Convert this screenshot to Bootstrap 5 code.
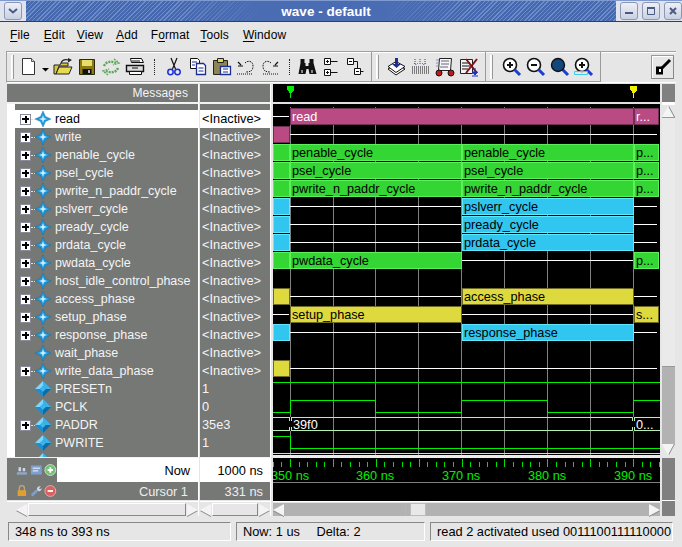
<!DOCTYPE html>
<html lang="en">
<head>
  <meta charset="UTF-8" />
  <title>wave - default</title>
  <link href="https://cdn.jsdelivr.net/npm/bootstrap@5.3.2/dist/css/bootstrap.min.css" rel="stylesheet">
  <style>
    html, body { height: 547px; overflow: hidden; }
    body { background: #e6e6e6; font-family: "Liberation Sans", Arial, sans-serif; font-size: 12.5px; color: #000; }

    /* title bar */
    .title-row { height: 22px; background: #dfe3ee; border-top: 1px solid #7f9ad0; border-bottom: 1px solid #2b3f6b; }
    .title-fill { width: 594px; color: #fff; font-weight: 700; font-size: 13.5px; line-height: 22px; padding-left: 10px;
      background:
        linear-gradient(90deg, transparent 25%, #4a6cb3 40%, #4a6cb3 60%, transparent 75%),
        repeating-linear-gradient(135deg, #6d8ccb 0 1px, #4568ae 1px 3px); }
    .win-btn { width: 18px; height: 18px; background: linear-gradient(#eef0f6, #c9d0e2); border: 1px solid #8c97b5; border-radius: 3px; }
    .win-btn svg { display: block; margin: 2px; }

    /* menu */
    .menu-row { height: 25px; padding-top: 6px; line-height: 15px; font-size: 12px; letter-spacing: .1px; }
    .menu-row u { text-underline-offset: 2px; }
    .menu-file { margin-left: 10px; }
    .menu-edit { margin-left: 14px; }
    .menu-view { margin-left: 12px; }
    .menu-add { margin-left: 13px; }
    .menu-format { margin-left: 13px; }
    .menu-tools { margin-left: 11px; }
    .menu-window { margin-left: 14px; }

    /* toolbar */
    .tool-strip { height: 32px; margin: 4px 6px 1px 6px; border: 1px solid #a0a0a0; border-right: 0; border-bottom-color: #fff; background: #e6e6e6; box-shadow: inset 0 1px 0 #fff; }
    .tool-group { height: 30px; border-right: 1px solid #9a9a9a; border-bottom: 1px solid #9a9a9a; }
    .tool-handle { width: 3px; height: 24px; background: #f7f7f7; border-right: 1px solid #999; border-left: 1px solid #fff; flex: none; margin-left: 4px; }
    .gap-doc { margin-right: 3px; }
    .gap-list { margin-right: 6px; }
    .gap-zoom { margin-right: 7px; }
    .tool-ico { width: 24px; height: 22px; flex: none; }
    .tool-ico svg { display: block; margin: 1px auto 0; }
    .tool-sep { width: 0; height: 16px; border-left: 1px dotted #222; margin: 0 7px; }
    .tool-sep-b { margin-right: 5px; }
    .tool-arrow { width: 10px; flex: none; }
    .tool-end { width: 4px; flex: none; }
    .tool-pick { width: 23px; height: 24px; margin-right: 2px; border: 1px solid #999; border-right-color: #888; border-bottom-color: #888; background: #e6e6e6; box-shadow: inset 1px 1px 0 #fff; }

    /* panes */
    .panes { height: 432px; margin-left: 7px; }
    .names-col { width: 191px; flex: none; }
    .values-col { width: 70px; margin-left: 1px; flex: none; }
    .wave-col { width: 387px; margin-left: 2px; flex: none; }
    .split-line { width: 1px; background: #fff; flex: none; }
    .pane-head { height: 18px; line-height: 18px; font-size: 12px; letter-spacing: .1px; background: #767876; color: #f4f4f4; text-align: right; padding-right: 10px; flex: none; }
    .head-rule { height: 2px; background: #f2f2f2; flex: none; }
    .foot-rule { height: 1px; background: #f2f2f2; flex: none; }
    .names-body { height: 353px; flex: none; overflow: hidden; background: #767876; border-left: 8px solid #fff; padding-top: 6px; color: #f4f4f4; }
    .values-body { height: 353px; flex: none; overflow: hidden; background: #767876; padding-top: 6px; color: #f4f4f4; font-size: 12.8px; }
    .sig-row { height: 18px; line-height: 18px; padding-left: 5px; white-space: nowrap; }
    .sig-row.picked { background: #fff; color: #000; }
    .sig-plus { width: 11px; height: 11px; background: #fff; border: 1px solid #8a8a9a; position: relative; flex: none; }
    .sig-plus::before { content: ""; position: absolute; left: 1px; right: 1px; top: 3.500px; height: 2px; background: #000; }
    .sig-plus::after { content: ""; position: absolute; top: 1px; bottom: 1px; left: 3.500px; width: 2px; background: #000; }
    .sig-dots { width: 4px; border-top: 1px dotted #ddd; flex: none; }
    .sig-gap { width: 15px; flex: none; }
    .sig-name { margin-left: 4px; }
    .val-row { height: 18px; line-height: 18px; padding-left: 2px; white-space: nowrap; }
    .val-row.picked { background: #fff; color: #000; }
    .now-row { height: 24px; flex: none; background: #fff; line-height: 25px; text-align: right; font-size: 12.8px; }
    .now-icons { width: 50px; height: 24px; background: #767876; gap: 0 2px; padding-left: 9px; }
    .cursor-row { height: 18px; flex: none; line-height: 20px; background: #767876; color: #eee; text-align: right; font-size: 12.8px; }
    .name-scroll { height: 15px; flex: none; margin-top: 1px; border-top: 1px solid #fff; padding-top: 1px; }
    .name-scroll-pad { padding-left: 9px; }
    .wave-scroll { margin-top: 0; }
    .now-label { padding-right: 8px; }
    .values-label { padding-right: 7px; }
    .cursor-label { padding-right: 10px; }

    /* scrollbars */
    .bar-h { height: 13px; background: #e6e6e6; }
    .bar-arrow-l, .bar-arrow-r { width: 12px; height: 13px; flex: none; position: relative; }
    .bar-arrow-l::after, .bar-arrow-r::after { content: ""; position: absolute; top: 1px; border: 6px solid transparent; border-left-width: 11px; border-right-width: 0; }
    .bar-arrow-l::after { border-left-width: 0; border-right-width: 11px; border-right-color: #f4f4f4; left: 0; filter: drop-shadow(0 1px 0 #888); }
    .bar-arrow-r::after { border-left-color: #f4f4f4; right: 0; filter: drop-shadow(0 1px 0 #888); }
    .bar-thumb { background: #e6e6e6; border: 1px solid #a8a8a8; border-top-color: #fff; border-left-color: #fff; border-right-color: #888; border-bottom-color: #888; }
    .wave-trough { background: #b2b2b2; }
    .wave-thumb { width: 16px; height: 13px; background: #e8e8e8; border: 1px solid #bbb; margin-left: 125px; position: relative; }
    .wave-thumb::before { content: ""; position: absolute; left: -6px; top: 0; bottom: 0; width: 1px; background: #d8c030; }

    /* right scrollbar column */
    .v-col { width: 13px; margin-left: 2px; flex: none; }
    .v-cap { height: 18px; background: #808080; flex: none; }
    .v-rule { height: 3px; background: #fff; flex: none; }
    .v-up, .v-down { height: 12px; background: #e6e6e6; flex: none; position: relative; }
    .v-up::after, .v-down::after { content: ""; position: absolute; left: 0; border: 6px solid transparent; }
    .v-up::after { bottom: 0; border-top-width: 0; border-bottom-width: 11px; border-bottom-color: #f4f4f4; filter: drop-shadow(1px 0 0 #888); }
    .v-down::after { top: 0; border-bottom-width: 0; border-top-width: 11px; border-top-color: #f4f4f4; filter: drop-shadow(1px 0 0 #888); }
    .v-thumb { height: 250px; flex: none; background: #eaeaea; border-bottom: 1px solid #999; border-top: 1px solid #999; }
    .v-trough { height: 77px; flex: none; background: #b2b2b2; }
    .v-foot { height: 42px; flex: none; background: #808080; margin-top: 2px; }
    .v-end { height: 16px; flex: none; background: #808080; border-top: 1px solid #fff; }

    /* status bar */
    .status-row { margin: 6px 0 0 8px; gap: 5px; }
    .status-cell { height: 19px; line-height: 17px; padding-left: 6px; border: 1px solid #fff; border-top-color: #888; border-left-color: #888; white-space: nowrap; overflow: hidden; font-size: 12.8px; }
    .cell-range { width: 223px; }
    .cell-now { width: 189px; }
    .cell-read { width: 243px; }
    .delta-gap { margin-left: 13px; }
    #wave { display: block; flex: none; }
    #wave text { font-family: "Liberation Sans", Arial, sans-serif; font-size: 12.7px; }
  </style>
</head>
<body>
  <svg width="0" height="0" class="position-absolute">
    <symbol id="star" viewBox="0 0 16 16">
      <path d="M8 0 10.500 5.500 16 8 10.500 10.500 8 16 5.500 10.500 0 8 5.500 5.500Z" fill="#1f9ae0" stroke="#12648f" stroke-width=".4"/>
      <path d="M8 4 9 7 12 8 9 9 8 12 7 9 4 8 7 7Z" fill="#c8f0ff"/>
    </symbol>
    <symbol id="diamond" viewBox="0 0 16 16">
      <path d="M8 0 16 8 8 16 0 8Z" fill="#1a8fd0"/>
      <path d="M8 0 0 8 5 8 8 5Z" fill="#7fd6fa"/>
      <path d="M8 0 16 8 11 8 8 5Z" fill="#38b4ea"/>
      <path d="M5 8 8 5 11 8 8 11Z" fill="#3cb6ee"/>
      <path d="M8 16 16 8 11 8 8 11Z" fill="#0e6ba8"/>
    </symbol>
    <symbol id="zoomglass" viewBox="0 0 20 20">
      <circle cx="8" cy="8" r="6.5" fill="#fff" stroke="#111" stroke-width="1.6"/>
      <path d="M12.5 12.5 18 18" stroke="#1c3fd0" stroke-width="3"/>
    </symbol>
  </svg>

  <!-- title bar -->
  <div class="title-row d-flex align-items-center">
    <div class="win-btn ms-1">
      <svg width="12" height="12" viewBox="0 0 12 12"><path d="M2 4l4 3.500L10 4" fill="none" stroke="#4a5a86" stroke-width="2"/></svg>
    </div>
    <div class="title-fill h-100 text-center ms-1">wave - default</div>
    <div class="d-flex ms-1 gap-1">
      <div class="win-btn"><svg width="12" height="12" viewBox="0 0 12 12"><path d="M2 8h8" stroke="#4a5a86" stroke-width="2"/></svg></div>
      <div class="win-btn"><svg width="12" height="12" viewBox="0 0 12 12"><path d="M2.500 2.500h7v7h-7z" fill="none" stroke="#4a5a86"/><path d="M2 3h8" stroke="#4a5a86" stroke-width="2"/></svg></div>
      <div class="win-btn"><svg width="12" height="12" viewBox="0 0 12 12"><path d="M3 3l6 6M9 3l-6 6" stroke="#4a5a86" stroke-width="2"/></svg></div>
    </div>
  </div>

  <!-- menu -->
  <div class="menu-row d-flex">
    <span class="menu-file"><u>F</u>ile</span>
    <span class="menu-edit"><u>E</u>dit</span>
    <span class="menu-view"><u>V</u>iew</span>
    <span class="menu-add"><u>A</u>dd</span>
    <span class="menu-format">F<u>o</u>rmat</span>
    <span class="menu-tools"><u>T</u>ools</span>
    <span class="menu-window"><u>W</u>indow</span>
  </div>

  <!-- toolbar -->
  <div class="tool-strip d-flex align-items-center">
    <div class="tool-group d-flex align-items-center">
      <div class="tool-handle gap-doc"></div>
      <div class="tool-ico"><svg width="20" height="20" viewBox="0 0 20 20"><path d="M3.500 1.500h9l3 3v13h-12z" fill="#fff" stroke="#333"/><path d="M12.500 1.500v3h3" fill="#ddd" stroke="#555"/></svg></div>
      <div class="tool-arrow"><svg width="10" height="20" viewBox="0 0 10 20"><path d="M1 11h7l-3.500 3.500z" fill="#000"/></svg></div>
      <div class="tool-ico"><svg width="20" height="20" viewBox="0 0 20 20"><path d="M1 17V8h6l1-2h7v3H6L3 17Z" fill="#d8c83a" stroke="#222"/><path d="M3 17l3-7h13l-3 7Z" fill="#e8da50" stroke="#222"/><path d="M8 6c1-3 4-4 8-3" fill="none" stroke="#222" stroke-width="1.200"/><path d="M15 1l4 2-4 2.500z" fill="#222"/></svg></div>
      <div class="tool-ico"><svg width="20" height="20" viewBox="0 0 20 20"><path d="M2.500 2.500h15v15h-15z" fill="#8c7a10" stroke="#2a2a10"/><path d="M5 3h10v6H5z" fill="#e8dc6a"/><path d="M5.500 12h9v5h-9z" fill="#111"/><path d="M11 13h2v3h-2z" fill="#bbb"/></svg></div>
      <div class="tool-ico"><svg width="20" height="20" viewBox="0 0 20 20" fill="none" stroke="#58a858" stroke-width="2.400" stroke-dasharray="2 1"><path d="M3 9c2-5 8-5 12-3"/><path d="M17 11c-2 5-8 5-12 3"/><path d="M13 2l5 4-6 2M7 18l-5-4 6-2" stroke-width="1.400"/></svg></div>
      <div class="tool-ico"><svg width="20" height="20" viewBox="0 0 20 20"><path d="M5.500 1.500h11l2 4h-12z" fill="#fff" stroke="#111"/><path d="M1.500 8.500h17v6h-17z" fill="#dcdcdc" stroke="#111" stroke-width="1.400"/><path d="M4.500 14.500h12v3h-12z" fill="#fff" stroke="#111"/><path d="M7 4h8M7 11h6" stroke="#111"/></svg></div>
      <div class="tool-sep"></div>
      <div class="tool-ico"><svg width="20" height="20" viewBox="0 0 20 20"><path d="M7 1l4.500 11M13 1L8.500 12" stroke="#111" stroke-width="1.200" fill="none"/><circle cx="6.500" cy="15" r="2.700" fill="none" stroke="#1c2fd8" stroke-width="1.500"/><circle cx="13.500" cy="15" r="2.700" fill="none" stroke="#1c2fd8" stroke-width="1.500"/></svg></div>
      <div class="tool-ico"><svg width="20" height="20" viewBox="0 0 20 20"><path d="M2.500 1.500h7l2 2v8h-9z" fill="#fff" stroke="#111"/><path d="M8.500 6.500h7l2 2v9h-9z" fill="#fff" stroke="#1c2f90" stroke-width="1.300"/><path d="M4 5h5M4 8h3M10.500 11h5M10.500 14h5" stroke="#1c2f90"/></svg></div>
      <div class="tool-ico"><svg width="20" height="20" viewBox="0 0 20 20"><path d="M1.500 3.500h14v14h-14z" fill="#8c8454" stroke="#222"/><path d="M5.500 1.500h6v4h-6z" fill="#e0d060" stroke="#222"/><path d="M8.500 9.500h10v8h-10z" fill="#fff" stroke="#1c2f90" stroke-width="1.300"/><path d="M11 12h5M11 15h5" stroke="#1c2f90"/></svg></div>
      <div class="tool-ico"><svg width="20" height="20" viewBox="0 0 20 20" fill="none" stroke="#111"><path d="M9 6c3-3 8-2 8 3s-3 6-7 6" stroke-dasharray="1.500 1"/><path d="M2 5l3 3M2 9h5" stroke-width="1.200"/><path d="M1 17h16" stroke-dasharray="1 1"/></svg></div>
      <div class="tool-ico"><svg width="20" height="20" viewBox="0 0 20 20" fill="none" stroke="#111"><path d="M11 6C8 3 3 4 3 9s3 6 7 6" stroke-dasharray="1.500 1"/><path d="M18 5l-3 3M18 9h-5" stroke-width="1.200"/><path d="M3 17h16" stroke-dasharray="1 1"/></svg></div>
      <div class="tool-sep tool-sep-b"></div>
      <div class="tool-ico"><svg width="20" height="20" viewBox="0 0 20 20"><path d="M3 2h4v4h1v3h3V6h1V2h4v4l3 11h-7l-1-5H9l-1 5H1L3 6Z" transform="translate(.5)" fill="#111"/><path d="M4 13h2v3H4zM14 13h2v3h-2z" fill="#888"/></svg></div>
      <div class="tool-ico"><svg width="20" height="20" viewBox="0 0 20 20" fill="none" stroke="#111"><path d="M3.500 1.500h6v6h-6zM3.500 12.500h6v6h-6z" fill="#fff"/><path d="M5 4.500h3M6.500 3v3M5 15.500h3M6.500 14v3M9.500 4.500h7M9.500 15.500h7"/></svg></div>
      <div class="tool-ico"><svg width="20" height="20" viewBox="0 0 20 20" fill="none" stroke="#111"><path d="M2.500 1.500h6v6h-6zM9.500 11.500h6v6h-6z" fill="#fff"/><path d="M4 4.500h3M11 14.500h3M8.500 4.500h4v7M15.500 14.500h3"/></svg></div>
      <div class="tool-end"></div>
    </div>
    <div class="tool-group d-flex align-items-center">
      <div class="tool-handle gap-list"></div>
      <div class="tool-ico"><svg width="20" height="20" viewBox="0 0 20 20"><path d="M1 12l8-5 9 5-9 6z" fill="#fff" stroke="#111"/><path d="M1 9.500l8-5 9 5-9 6z" fill="#fff" stroke="#111"/><path d="M8 1h3v6h3l-4.500 4L5 7h3z" fill="#1c2f90"/></svg></div>
      <div class="tool-ico"><svg width="20" height="20" viewBox="0 0 20 20" fill="none"><path d="M4 2v5M9 2v5M14 2v5M3 6l2 2 2-2M11 6l2 2 2-2" stroke="#2a3fc0" stroke-dasharray="1 1"/><path d="M1 10h18M1 12h18M1 14h18M1 16h18" stroke="#111" stroke-dasharray="1 1"/></svg></div>
      <div class="tool-ico"><svg width="20" height="20" viewBox="0 0 20 20"><path d="M4.500 1.500h12l-1 12h-12z" fill="#f6f6f6" stroke="#222"/><path d="M6 4h8M6 7h8M5 10h8" stroke="#667"/><path d="M1 3h3M1 6h3M1 9h2" stroke="#8890b0"/><circle cx="4" cy="16" r="3" fill="#c21818" stroke="#111"/><circle cx="16" cy="16" r="3" fill="#c21818" stroke="#111"/></svg></div>
      <div class="tool-ico"><svg width="20" height="20" viewBox="0 0 20 20"><path d="M1.500 2.500h12v14h-12z" fill="#f4f4f4" stroke="#222"/><path d="M3 6h8M3 9h8M3 12h6" stroke="#111"/><path d="M7 2l11 14M18 2 7 16" stroke="#7c1616" stroke-width="2"/><path d="M16 11v5M13.500 15l2.500 3 2.500-3zM13 19h6" fill="#1c2fc0" stroke="#1c2fc0"/></svg></div>
      <div class="tool-end"></div>
    </div>
    <div class="tool-group d-flex align-items-center">
      <div class="tool-handle gap-zoom"></div>
      <div class="tool-ico"><svg width="20" height="20" viewBox="0 0 20 20"><use href="#zoomglass"/><path d="M5 8h6M8 5v6" stroke="#111" stroke-width="2"/></svg></div>
      <div class="tool-ico"><svg width="20" height="20" viewBox="0 0 20 20"><use href="#zoomglass"/><path d="M5 8h6" stroke="#111" stroke-width="2"/></svg></div>
      <div class="tool-ico"><svg width="20" height="20" viewBox="0 0 20 20"><path d="M12.500 12.500 18 18" stroke="#1c3fd0" stroke-width="3"/><circle cx="8" cy="8" r="6.500" fill="#12477c" stroke="#111" stroke-width="1.400"/></svg></div>
      <div class="tool-ico"><svg width="20" height="20" viewBox="0 0 20 20"><use href="#zoomglass"/><path d="M5 8h6M8 5v6" stroke="#111" stroke-width="2"/><path d="M.5 14.500h13v3H.5z" fill="none" stroke="#38d0f0"/></svg></div>
      <div class="tool-end"></div>
    </div>
    <div class="tool-pick ms-auto d-flex align-items-center justify-content-center">
      <svg width="18" height="18" viewBox="0 0 18 18"><path d="M16 2 7 11" stroke="#000" stroke-width="3"/><path d="M2 8.500h6l1 1v7H2z" fill="#000"/><path d="M5 11h2v3H5z" fill="#fff"/></svg>
    </div>
  </div>

  <!-- signals, values, waveforms -->
  <div class="panes d-flex">
    <div class="names-col d-flex flex-column">
      <div class="pane-head">Messages</div>
      <div class="head-rule"></div>
      <div class="names-body" id="names"></div>
      <div class="foot-rule"></div>
      <div class="now-row d-flex justify-content-between">
        <div class="now-icons d-flex align-items-center">
          <svg width="13" height="13" viewBox="0 0 14 14"><path d="M1 9h12v3H1z" fill="#8fa6c6"/><path d="M3 3h3v5H3zM8 4h3v4H8z" fill="#cfd6de"/></svg>
          <svg width="14" height="14" viewBox="0 0 14 14"><path d="M1 2h12v10H1z" fill="#7f9fd0"/><path d="M3 5h8M3 8h6" stroke="#fff"/></svg>
          <svg width="14" height="14" viewBox="0 0 14 14"><circle cx="7" cy="7" r="6" fill="#74c074" stroke="#c8e8c8"/><path d="M4 7h6M7 4v6" stroke="#fff" stroke-width="2"/></svg>
        </div>
        <span class="now-label">Now</span>
      </div>
      <div class="cursor-row d-flex justify-content-between">
        <div class="now-icons d-flex align-items-center h-100">
          <svg width="13" height="14" viewBox="0 0 14 14"><path d="M4 6V3.500a3 3 0 0 1 6 0V6" fill="none" stroke="#c4a878" stroke-width="1.500"/><path d="M2 6h10v7H2z" fill="#e0a030"/></svg>
          <svg width="14" height="14" viewBox="0 0 14 14"><path d="M2 12 8 6" stroke="#7f9fd0" stroke-width="3"/><path d="M8 6a3 3 0 0 1 4-4l-2 2 1 1 2-1a3 3 0 0 1-4 3z" fill="#cfd6de"/></svg>
          <svg width="14" height="14" viewBox="0 0 14 14"><circle cx="7" cy="7" r="6" fill="#d86060" stroke="#e8b0b0"/><path d="M4 7h6" stroke="#fff" stroke-width="2"/></svg>
        </div>
        <span class="cursor-label">Cursor 1</span>
      </div>
      <div class="name-scroll name-scroll-pad">
        <div class="bar-h d-flex">
          <div class="bar-arrow-l"></div>
          <div class="bar-thumb flex-grow-1"></div>
          <div class="bar-arrow-r"></div>
        </div>
      </div>
    </div>
    <div class="split-line"></div>
    <div class="values-col d-flex flex-column">
      <div class="pane-head"></div>
      <div class="head-rule"></div>
      <div class="values-body" id="values"></div>
      <div class="foot-rule"></div>
      <div class="now-row values-label">1000 ns</div>
      <div class="cursor-row values-label">331 ns</div>
      <div class="name-scroll">
        <div class="bar-h d-flex">
          <div class="bar-arrow-l"></div>
          <div class="bar-thumb flex-grow-1"></div>
          <div class="bar-arrow-r"></div>
        </div>
      </div>
    </div>
    <div class="split-line"></div>
    <div class="wave-col d-flex flex-column">
      <svg id="wave" width="387" height="417" viewBox="273 84 387 417"></svg>
      <div class="name-scroll wave-scroll">
        <div class="bar-h d-flex wave-trough">
          <div class="bar-arrow-l"></div>
          <div class="wave-thumb"></div>
          <div class="flex-grow-1"></div>
          <div class="bar-arrow-r"></div>
        </div>
      </div>
    </div>
    <div class="v-col d-flex flex-column">
      <div class="v-cap"></div>
      <div class="v-rule"></div>
      <div class="v-up"></div>
      <div class="v-thumb"></div>
      <div class="v-trough"></div>
      <div class="v-down"></div>
      <div class="v-foot"></div>
      <div class="v-end"></div>
    </div>
  </div>

  <!-- status bar -->
  <div class="status-row d-flex">
    <div class="status-cell cell-range">348 ns to 393 ns</div>
    <div class="status-cell cell-now">Now: 1 us <span class="delta-gap">Delta: 2</span></div>
    <div class="status-cell cell-read">read 2 activated used 0011100111110000</div>
  </div>

  <script>
    // kind: s = group with plus box, q = group without, d = plain signal, p = bus, x = only the top of the icon shows
    const signals = [
      ["read", "s", "<Inactive>"], ["write", "s", "<Inactive>"], ["penable_cycle", "s", "<Inactive>"],
      ["psel_cycle", "s", "<Inactive>"], ["pwrite_n_paddr_cycle", "s", "<Inactive>"], ["pslverr_cycle", "s", "<Inactive>"],
      ["pready_cycle", "s", "<Inactive>"], ["prdata_cycle", "s", "<Inactive>"], ["pwdata_cycle", "s", "<Inactive>"],
      ["host_idle_control_phase", "s", "<Inactive>"], ["access_phase", "s", "<Inactive>"], ["setup_phase", "s", "<Inactive>"],
      ["response_phase", "s", "<Inactive>"], ["wait_phase", "q", "<Inactive>"], ["write_data_phase", "s", "<Inactive>"],
      ["PRESETn", "d", "1"], ["PCLK", "d", "0"], ["PADDR", "p", "35e3"], ["PWRITE", "d", "1"], ["", "x", ""]
    ];

    const namesEl = document.getElementById("names");
    const valuesEl = document.getElementById("values");
    signals.forEach(([name, kind, value], i) => {
      const plus = kind === "s" || kind === "p";
      const sym = kind === "s" || kind === "q" ? "star" : "diamond";
      const row = document.createElement("div");
      row.className = "sig-row d-flex align-items-center" + (i === 0 ? " picked" : "");
      row.innerHTML = (plus ? '<div class="sig-plus"></div><div class="sig-dots"></div>' : '<div class="sig-gap"></div>') +
        `<svg width="16" height="16" class="flex-none"><use href="#${sym}"/></svg>`;
      const label = document.createElement("span");
      label.className = "sig-name";
      label.textContent = name;
      row.appendChild(label);
      namesEl.appendChild(row);

      const val = document.createElement("div");
      val.className = "val-row" + (i === 0 ? " picked" : "");
      val.textContent = value;
      valuesEl.appendChild(val);
    });

    // waveform canvas, svg coordinates are the same as the window's
    const GRID = [290, 333, 375, 418, 461, 504, 547, 590, 633];
    const COLORS = {
      p: ["#b94a84", "#6f2f52", "#fff"], g: ["#33d633", "#5cf05c", "#000"],
      c: ["#30c6f0", "#60e8ff", "#000"], y: ["#ded93c", "#6e6a24", "#000"]
    };
    const A = [273, 289], B = [290, 461], C = [462, 633], D = [634, 658];
    const rows = [
      [["l", A], ["p", [290, 633], "read"], ["p", D, "r..."]],
      [["p", A], ["l", [290, 657]]],
      [["g", A], ["g", B, "penable_cycle"], ["g", C, "penable_cycle"], ["g", D, "p..."]],
      [["g", A], ["g", B, "psel_cycle"], ["g", C, "psel_cycle"], ["g", D, "p..."]],
      [["g", A], ["g", B, "pwrite_n_paddr_cycle"], ["g", C, "pwrite_n_paddr_cycle"], ["g", D, "p..."]],
      [["c", A], ["l", B], ["c", C, "pslverr_cycle"], ["l", [634, 657]]],
      [["c", A], ["l", B], ["c", C, "pready_cycle"], ["l", [634, 657]]],
      [["c", A], ["l", B], ["c", C, "prdata_cycle"], ["l", [634, 657]]],
      [["g", A], ["g", B, "pwdata_cycle"], ["l", C], ["g", D, "p..."]],
      [],
      [["y", A], ["l", B], ["y", C, "access_phase"], ["l", [634, 657]]],
      [["l", A], ["y", B, "setup_phase"], ["l", C], ["y", D, "s..."]],
      [["c", A], ["l", B], ["c", C, "response_phase"], ["l", [634, 657]]],
      [],
      [["y", A], ["l", [290, 657]]]
    ];

    let out = '<rect x="273" y="84" width="387" height="417" fill="#000"/>';
    out += '<g shape-rendering="crispEdges">';
    out += '<rect x="273" y="102" width="387" height="2" fill="#e0e0e0"/>';
    GRID.forEach(x => { out += `<rect x="${x}" y="107" width="1" height="349" fill="#808080"/>`; });

    rows.forEach((segs, k) => {
      segs.forEach(([kind, [x1, x2], text]) => {
        if (kind === "l") {
          out += `<rect x="${x1}" y="${116 + 18 * k}" width="${x2 - x1}" height="1" fill="#fff"/>`;
        } else {
          const [fill, edge] = COLORS[kind];
          out += `<rect x="${x1 + .5}" y="${108.5 + 18 * k}" width="${x2 - x1}" height="16" fill="${fill}" stroke="${edge}"/>`;
        }
      });
    });

    // PRESETn, PCLK, PADDR, PWRITE
    const green = "#00f000", bus = "#b4f0b4";
    const line = (x, y, w, h, c) => `<rect x="${x}" y="${y}" width="${w}" height="${h}" fill="${c}"/>`;
    out += line(273, 382, 387, 1, green);
    [[273, 290, 412], [290, 375, 400], [375, 461, 412], [461, 547, 400], [547, 633, 412], [633, 660, 400]].forEach(([a, b, y]) => {
      out += line(a, y, b - a, 1, green);
    });
    [290, 375, 461, 547, 633].forEach(x => { out += line(x, 400, 1, 13, green); });
    out += line(273, 417, 387, 1, bus) + line(273, 430, 387, 1, bus);
    [290, 633].forEach(x => {
      out += line(x - 1, 417, 3, 14, "#000") + line(x - 1, 417, 1, 4, bus) + line(x + 1, 417, 1, 4, bus) + line(x - 1, 427, 1, 4, bus) + line(x + 1, 427, 1, 4, bus);
    });
    out += line(273, 436, 17, 1, green) + line(290, 436, 1, 13, green) + line(290, 448, 370, 1, green);
    out += line(273, 453, 387, 1, bus);
    out += line(273, 455, 387, 3, "#ececec");

    // time axis
    for (let i = 0; i < 46; i++) {
      const x = Math.round(272.8 + i * 8.58);
      const major = i % 5 === 2;
      out += line(x, major ? 459 : 462, 1, major ? 8 : 5, "#00e000");
    }
    out += line(273, 482, 387, 1, "#808080");
    out += "</g>";

    rows.forEach((segs, k) => {
      segs.forEach(([kind, [x1], text]) => {
        if (text) out += `<text x="${x1 + 2}" y="${121 + 18 * k}" fill="${COLORS[kind][2]}">${text}</text>`;
      });
    });
    out += '<text x="293" y="429" fill="#fff">39f0</text><text x="636" y="429" fill="#fff">0...</text>';
    [[290, "350 ns"], [375, "360 ns"], [461, "370 ns"], [547, "380 ns"], [633, "390 ns"]].forEach(([x, t]) => {
      out += `<text x="${x}" y="480" text-anchor="middle" fill="#00f000">${t}</text>`;
    });
    // cursor flags
    const flag = (x, c) => `<path d="M${x - 3} 86h7v4l-2 2v1h-1v5h-1v-5h-1v-1l-2-2z" fill="${c}" shape-rendering="crispEdges"/>`;
    out += flag(290, "#00f000") + flag(633, "#f0f000");

    document.getElementById("wave").innerHTML = out;
  </script>
  <script src="https://cdn.jsdelivr.net/npm/bootstrap@5.3.2/dist/js/bootstrap.bundle.min.js"></script>
</body>
</html>
